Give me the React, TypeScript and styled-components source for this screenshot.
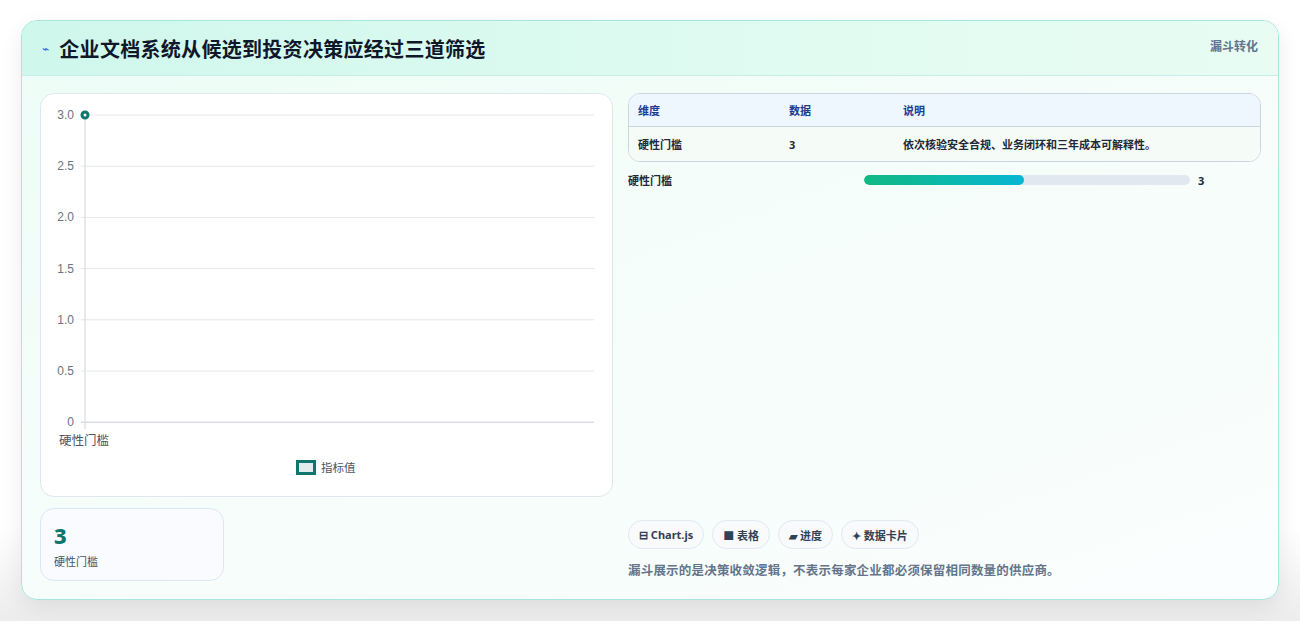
import React from "react";
import styled, { createGlobalStyle } from "styled-components";

const Global = createGlobalStyle`
  html, body { margin: 0; padding: 0; background: #fff; }
  body { font-family: "Noto Sans", "Noto Sans CJK SC", sans-serif; }
  * { box-sizing: border-box; }
`;

const Page = styled.div`
  width: 1300px; height: 621px; padding: 20px 21px 0 21px;
  background: linear-gradient(#fff 0%, #fff 85%, #ececec 100%);
`;
const Card = styled.div`
  height: 580px; border: 1px solid #a8e6dc; border-radius: 16px;
  background: linear-gradient(160deg, #ecfdf6 0%, #f4fdf9 40%, #fbfefe 100%);
  box-shadow: 0 8px 22px rgba(0,0,0,0.08); overflow: hidden;
  display: flex; flex-direction: column;
`;
const Header = styled.div`
  height: 56px; display: flex; align-items: center; justify-content: space-between;
  padding: 0 20px 0 20px; border-bottom: 1px solid #c9ece6;
  background: linear-gradient(90deg, #cff7ec 0%, #e0fbf1 60%, #e8fcf3 100%);
`;
const Title = styled.h1`
  margin: 0; font-size: 20px; font-weight: 700; color: #0f172a; display: flex; align-items: center; gap: 10px;
  letter-spacing: 0.3px;
`;
const Spark = styled.span` color: #2563eb; font-size: 12px; font-weight: 400; `;
const Tag = styled.span` font-size: 12px; font-weight: 700; color: #64748b; align-self: flex-start; margin-top: 16px; `;
const Body = styled.div`
  flex: 1; display: grid; grid-template-columns: 573px 633px; gap: 15px; padding: 17px 18px 18px 18px;
`;
const Col = styled.div` display: flex; flex-direction: column; gap: 11px; `;
const ChartCard = styled.div`
  height: 404px; background: #fff; border: 1px solid #dfe6ee; border-radius: 14px; position: relative;
`;
const Stat = styled.div`
  width: 184px; height: 73px; border: 1px solid #dbe7f3; border-radius: 14px; background: #f9fbfe;
  padding: 12px 13px;
`;
const StatNum = styled.div` font-size: 22px; font-weight: 800; color: #0f766e; line-height: 28px; `;
const StatLabel = styled.div` font-size: 11px; color: #475569; margin-top: 4px; `;
const Table = styled.div` border: 1px solid #cbd5e1; border-radius: 12px; overflow: hidden; background: #fff; `;
const Row = styled.div<{ $head?: boolean }>`
  display: grid; grid-template-columns: 151px 114px 1fr; height: ${p => p.$head ? 33 : 34}px; align-items: center;
  padding-left: 9px; font-size: 11px; font-weight: 700;
  color: ${p => p.$head ? "#1e3a8a" : "#1f2937"};
  background: ${p => p.$head ? "#eef6fe" : "#f5fcf8"};
  border-bottom: ${p => p.$head ? "1px solid #cbd5e1" : "none"};
`;
const Bar = styled.div` display: grid; grid-template-columns: 236px 334px auto; align-items: center; font-size: 11px; font-weight: 700; color: #1f2937; margin-top: 10px; `;
const Track = styled.div` height: 10px; background: #e2e8f0; border-radius: 5px; overflow: hidden; margin-right: 8px; `;
const Fill = styled.div` height: 100%; border-radius: 5px; background: linear-gradient(90deg, #10b981, #06b6d4); `;
const Spacer = styled.div` flex: 1; `;
const Chips = styled.div` display: flex; gap: 8px; `;
const Chip = styled.span`
  height: 29px; padding: 0 10px; border: 1px solid #e2e8f0; border-radius: 15px; background: #f8fafc;
  font-size: 11px; font-weight: 700; color: #334155; display: inline-flex; align-items: center; gap: 4px;
`;
const Note = styled.p` margin: 11px 0 2px; font-size: 12.5px; font-weight: 700; color: #64748b; letter-spacing: 0.2px; `;

const ticks = ["3.0", "2.5", "2.0", "1.5", "1.0", "0.5", "0"];

function Chart() {
  return (
    <svg width="571" height="402" style={{ display: "block" }}>
      {ticks.map((t, i) => {
        const y = 21 + i * 51.2;
        return (
          <g key={t}>
            <line x1="40" x2="553" y1={y} y2={y} stroke={i === 6 ? "#c8ccd4" : "#e5e7eb"} />
            <text x="33" y={y + 4} textAnchor="end" fontSize="12" fill="#6b7280" fontFamily="Liberation Sans, sans-serif">{t}</text>
          </g>
        );
      })}
      <line x1="44" x2="44" y1="21" y2="335" stroke="#d1d5db" />
      <circle cx="44" cy="21" r="3" fill="#fff" stroke="#0f766e" strokeWidth="3" />
      <text x="18" y="351" fontSize="12.5" fill="#4b5563" fontFamily="Noto Sans CJK SC, sans-serif">硬性门槛</text>
      <rect x="256.5" y="367.5" width="17" height="12" fill="#e3ecec" stroke="#0f766e" strokeWidth="3" />
      <text x="280" y="378" fontSize="11.5" fill="#4b5563" fontFamily="Noto Sans CJK SC, sans-serif">指标值</text>
    </svg>
  );
}

export default function App() {
  return (
    <>
      <Global />
      <Page>
        <Card>
          <Header>
            <Title><Spark>⌁</Spark>企业文档系统从候选到投资决策应经过三道筛选</Title>
            <Tag>漏斗转化</Tag>
          </Header>
          <Body>
            <Col>
              <ChartCard><Chart /></ChartCard>
              <Stat>
                <StatNum>3</StatNum>
                <StatLabel>硬性门槛</StatLabel>
              </Stat>
            </Col>
            <Col style={{ gap: 0 }}>
              <Table>
                <Row $head><span>维度</span><span>数据</span><span>说明</span></Row>
                <Row><span>硬性门槛</span><span>3</span><span>依次核验安全合规、业务闭环和三年成本可解释性。</span></Row>
              </Table>
              <Bar>
                <span>硬性门槛</span>
                <Track><Fill style={{ width: "49%" }} /></Track>
                <span>3</span>
              </Bar>
              <Spacer />
              <Chips>
                <Chip>⊟ Chart.js</Chip>
                <Chip>■ 表格</Chip>
                <Chip>▰ 进度</Chip>
                <Chip>✦ 数据卡片</Chip>
              </Chips>
              <Note>漏斗展示的是决策收敛逻辑，不表示每家企业都必须保留相同数量的供应商。</Note>
            </Col>
          </Body>
        </Card>
      </Page>
    </>
  );
}
